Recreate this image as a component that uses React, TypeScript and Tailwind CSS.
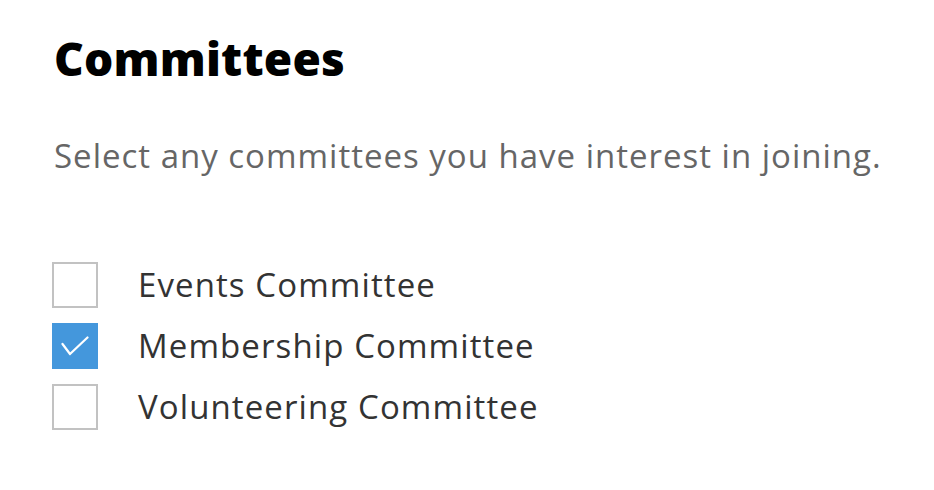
import { useState } from "react";

const COMMITTEES = [
  { id: "events", label: "Events Committee" },
  { id: "membership", label: "Membership Committee" },
  { id: "volunteering", label: "Volunteering Committee" },
];

export default function App() {
  const [selected, setSelected] = useState<string[]>(["membership"]);

  const toggle = (id: string) =>
    setSelected(s => (s.includes(id) ? s.filter(x => x !== id) : [...s, id]));

  return (
    <div className="min-h-screen bg-white px-[54px] pt-[26px] font-['Open_Sans','Lato',sans-serif]">
      <h1 className="text-[46px] leading-[64px] font-extrabold text-black tracking-[0.2px]">Committees</h1>
      <p className="mt-[46px] text-[33px] leading-[40px] tracking-[1px] whitespace-nowrap text-[#666666]">
        Select any committees you have interest in joining.
      </p>

      <div className="mt-[86px] flex flex-col gap-[15px]">
        {COMMITTEES.map(({ id, label }) => {
          const on = selected.includes(id);
          return (
            <label key={id} className="flex items-center gap-[40px] cursor-pointer">
              <button
                type="button"
                onClick={() => toggle(id)}
                className={`w-[46px] h-[46px] -ml-[2px] flex items-center justify-center border-2 ${
                  on ? "bg-[#4497dc] border-[#4497dc]" : "bg-white border-[#c2c2c2]"
                }`}
              >
                {on && (
                  <svg width="28" height="20" viewBox="0 0 28 20" fill="none">
                    <path d="M1.5 8 L9 18 L26.5 1.5" stroke="white" strokeWidth="2.2" strokeLinecap="round" strokeLinejoin="round" />
                  </svg>
                )}
              </button>
              <span className="text-[33px] leading-[46px] tracking-[1.1px] whitespace-nowrap text-[#333333]">{label}</span>
            </label>
          );
        })}
      </div>
    </div>
  );
}
